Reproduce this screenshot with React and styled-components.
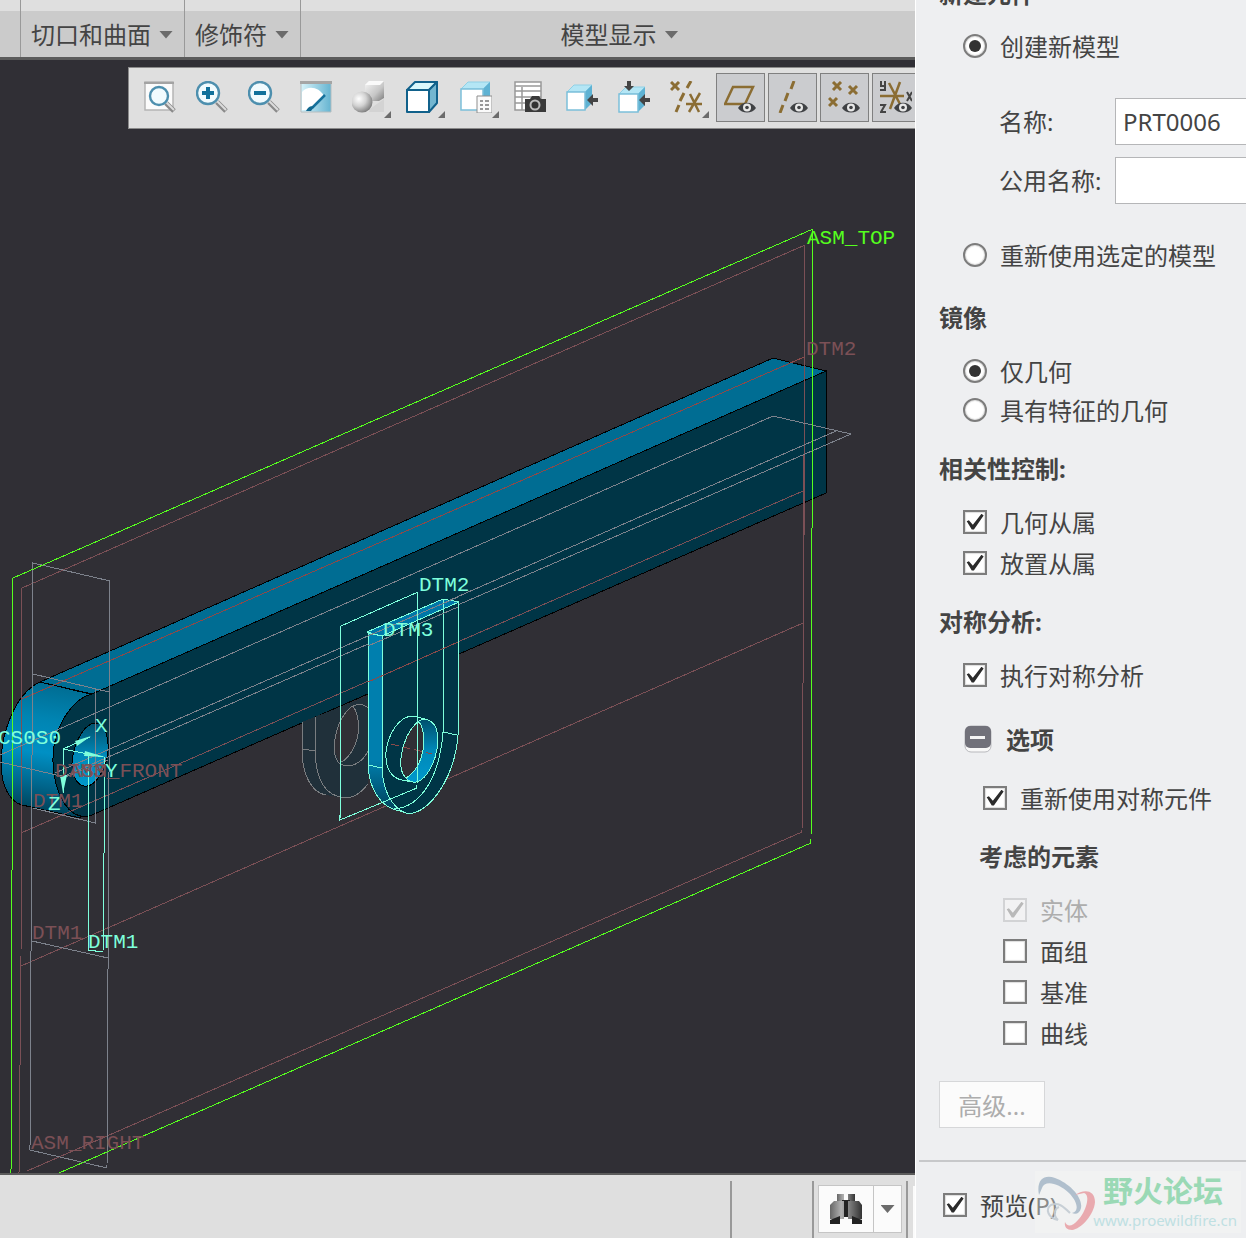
import React from 'react'
import styled, { createGlobalStyle, css } from 'styled-components'

const App = () => {
  return (
    <Page>
      <GlobalStyle />
      <Workspace>
        <Ribbon />
        <Canvas>
          <Model />
          <Toolbar />
        </Canvas>
        <StatusBar />
      </Workspace>
      <MirrorPanel />
    </Page>
  )
}

/* ---------- ribbon ---------- */

const Ribbon = () => (
  <RibbonBar>
    <Group $width={20} />
    <Group $width={164}>
      <GroupButton>切口和曲面<Arrow /></GroupButton>
    </Group>
    <Group $width={116}>
      <GroupButton>修饰符<Arrow /></GroupButton>
    </Group>
    <Group $center>
      <GroupButton>模型显示<Arrow /></GroupButton>
    </Group>
  </RibbonBar>
)

/* ---------- toolbar icons ---------- */

const Lens = ({ cx, cy, r }) => (
  <>
    <path d={`M${cx + r - 2} ${cy + r - 2}L30 30`} stroke="#8a8a8a" strokeWidth="5" />
    <path d={`M${cx + r - 2} ${cy + r - 3}L30 29`} stroke="#dcdcdc" strokeWidth="2" />
    <circle cx={cx} cy={cy} r={r} fill="#f1fbfe" stroke="#4d8fae" strokeWidth="2.4" />
  </>
)

const Eye = ({ x = 13, y = 20 }) => (
  <g transform={`translate(${x} ${y})`}>
    <path d="M0 7C4 0 14 0 18 7C14 13 4 13 0 7Z" fill="#3f4144" />
    <circle cx="9" cy="6.500" r="4" fill="#e8e8e8" />
    <circle cx="9" cy="6.500" r="1.800" fill="#3f4144" />
  </g>
)

const Box = ({ y = 0, w = 30, h = 32 }) => (
  <>
    <path d={`M1 ${y + 8}L8 ${y + 1}H${w}L${w - 7} ${y + 8}Z`} fill="#b4e6f5" stroke="#8fd0e6" />
    <path d={`M${w - 7} ${y + 8}L${w} ${y + 1}V${h - 8}L${w - 7} ${h - 1}Z`} fill="#5eb2d3" />
    <path d={`M1 ${y + 8}H${w - 7}V${h - 1}H1Z`} fill="#fff" stroke="#7cc0da" strokeWidth="1.500" />
  </>
)

const icons = {
  refit: (
    <>
      <path d="M1 1H29V29H1Z" fill="#fbfbfb" stroke="#b5b5b5" strokeWidth="1.500" />
      <path d="M0 2H30" stroke="#a3a3a3" strokeWidth="2" />
      <Lens cx={15} cy={15} r={9} />
    </>
  ),
  zoomIn: (
    <>
      <Lens cx={12} cy={12} r={11} />
      <path d="M12 6V18M6 12H18" stroke="#11719b" strokeWidth="4" />
    </>
  ),
  zoomOut: (
    <>
      <Lens cx={12} cy={12} r={11} />
      <path d="M6 12H18" stroke="#11719b" strokeWidth="4" />
    </>
  ),
  repaint: (
    <>
      <defs>
        <linearGradient id="sky" x2="1">
          <stop stopColor="#d8f3fa" />
          <stop offset="1" stopColor="#65b4d1" />
        </linearGradient>
      </defs>
      <path d="M1 2H31V31H1Z" fill="url(#sky)" stroke="#b4bdc0" />
      <path d="M0 1.500H32" stroke="#a5a5a5" strokeWidth="3" />
      <path d="M2 11C8 4 19 6 24 15L10 29H2Z" fill="#fff" />
      <path d="M25 14L12 27" stroke="#17719b" strokeWidth="2.500" />
      <path d="M6 30C8 26 11 24 14 26L11 30Z" fill="#12688f" />
    </>
  ),
  shading: (
    <>
      <defs>
        <radialGradient id="ball" cx=".35" cy=".35" r=".7">
          <stop stopColor="#fff" />
          <stop offset=".5" stopColor="#d2d2d2" />
          <stop offset="1" stopColor="#7c7c7c" />
        </radialGradient>
        <linearGradient id="cube" x2="1" y2="1">
          <stop stopColor="#f6f6f6" />
          <stop offset=".6" stopColor="#c6c6c6" />
          <stop offset="1" stopColor="#7c7c7c" />
        </linearGradient>
      </defs>
      <path d="M18 28L32 18V31H17Z" fill="#c8c8c8" opacity=".5" />
      <path d="M13 4L17 0H32V17L27 20H18L13 14Z" fill="url(#cube)" />
      <path d="M13 4L17 0H32L28 4Z" fill="#fafafa" />
      <circle cx="10" cy="21" r="10.500" fill="url(#ball)" />
    </>
  ),
  display: (
    <g stroke="#11618b" strokeWidth="2" strokeLinejoin="round">
      <path d="M1 9L9 1H31L23 9Z" fill="#d9f7fb" />
      <path d="M23 9L31 1V22L23 31Z" fill="#73b6d0" />
      <path d="M1 9H23V31H1Z" fill="#fff" />
    </g>
  ),
  saved: (
    <>
      <Box h={30} />
      <path d="M17 15H32V32H17Z" fill="#fafafa" stroke="#8e8e8e" />
      <path d="M20 20H23M25 20H29M20 24H23M25 24H29M20 28H23M25 28H29" stroke="#777" strokeWidth="1.500" />
    </>
  ),
  viewManager: (
    <>
      <path d="M1 1H27V29H1Z" fill="#fff" stroke="#999" strokeWidth="1.500" />
      <path d="M1 5H27M1 10H27M1 16H27M1 22H27M8 6V29" stroke="#999" strokeWidth="1.500" />
      <path d="M11 18H16L18 15H25L27 18H32V31H11Z" fill="#3a3a3a" />
      <circle cx="21" cy="24" r="5.500" fill="#bbb" />
      <circle cx="21" cy="24" r="3.500" fill="#333" />
    </>
  ),
  fromRight: (
    <>
      <Box y={3} w={26} h={30} />
      <path d="M21 19L27 13V17H32V21H27V25Z" fill="#444" />
    </>
  ),
  twoSides: (
    <>
      <Box y={5} w={27} h={32} />
      <path d="M21 19L27 13V17H32V21H27V25Z" fill="#444" />
      <path d="M11 10L6 5H9V0H13V5H16Z" fill="#444" />
    </>
  ),
  datumFilter: (
    <g stroke="#8b6d33" strokeWidth="3">
      <path d="M1 1L9 9M9 1L1 9M21 0L17 7M14 12L10 20M9 24L6 31" />
      <path d="M16 23H32M30 12L19 31M20 13L29 31" strokeWidth="2.500" />
    </g>
  ),
  planes: (
    <>
      <path d="M9 6H29L21 23H1Z" fill="none" stroke="#8b6d33" strokeWidth="2.500" />
      <Eye x={14} />
    </>
  ),
  axes: (
    <>
      <path d="M18 0L15 8M12 12L9 20M7 24L4 32" stroke="#8b6d33" strokeWidth="3" />
      <Eye x={14} />
    </>
  ),
  points: (
    <>
      <path d="M5 1L13 9M13 1L5 9M21 5L29 13M29 5L21 13M1 17L9 25M9 17L1 25" stroke="#8b6d33" strokeWidth="3" />
      <Eye x={14} />
    </>
  ),
  csys: (
    <>
      <path d="M0 15H24M20 1L10 28M9 2L21 25" stroke="#8b6d33" strokeWidth="2.500" />
      <path d="M1 0V5H5M5 0V9H0M27 11L32 20M32 11L27 20M0 24H5L1 31H6" fill="none" stroke="#444" strokeWidth="2" />
      <Eye x={14} />
    </>
  ),
}

const tools = [
  { icon: 'refit', label: '重新调整' },
  { icon: 'zoomIn', label: '放大' },
  { icon: 'zoomOut', label: '缩小' },
  { icon: 'repaint', label: '重画' },
  { icon: 'shading', label: '渲染选项', menu: true },
  { icon: 'display', label: '显示样式', menu: true },
  { icon: 'saved', label: '已保存方向', menu: true },
  { icon: 'viewManager', label: '视图管理器' },
  { icon: 'fromRight', label: '修剪' },
  { icon: 'twoSides', label: '双向修剪' },
  { icon: 'datumFilter', label: '基准显示过滤器', menu: true },
  { icon: 'planes', label: '平面显示', on: true },
  { icon: 'axes', label: '轴显示', on: true },
  { icon: 'points', label: '点显示', on: true },
  { icon: 'csys', label: '坐标系显示', on: true },
]

const Toolbar = () => (
  <ToolRow>
    {tools.map((t) => (
      <Tool key={t.icon} aria-label={t.label} $menu={t.menu} $on={t.on}>
        <svg width="32" height="32" viewBox="0 0 32 32">{icons[t.icon]}</svg>
      </Tool>
    ))}
  </ToolRow>
)

/* ---------- 3D view ---------- */

const Model = () => (
  <Drawing viewBox="0 60 915 1113" preserveAspectRatio="xMinYMin slice">
    <defs>
      <linearGradient id="round" x1=".3" y1="0" x2=".2" y2="1">
        <stop stopColor="#006d93" />
        <stop offset=".25" stopColor="#0084b2" />
        <stop offset=".5" stopColor="#0090c4" />
        <stop offset=".75" stopColor="#00648a" />
        <stop offset="1" stopColor="#003546" />
      </linearGradient>
      <linearGradient id="bore" x2="0" y2="1">
        <stop stopColor="#00506c" />
        <stop offset=".5" stopColor="#0088b8" />
        <stop offset="1" stopColor="#0098cc" />
      </linearGradient>
      <linearGradient id="foot" x2="0" y2="1">
        <stop stopColor="#007fae" />
        <stop offset=".7" stopColor="#007fae" />
        <stop offset="1" stopColor="#003f56" />
      </linearGradient>
    </defs>

    {/* link bar */}
    <g stroke="#000" shapeRendering="crispEdges">
      <path d="M40 682C14 694 1 735 1 763C1 788 11 802 22 805L80 818L100 700L90 694Z" fill="url(#round)" />
      <path d="M40 682L773 358L826 371L92 694Z" fill="#006d93" />
      <path d="M826 371V493L92 815C70 823 54 795 53 762C52 728 72 699 92 694Z" fill="#003546" />
      <path d="M95 723C107 724 110 742 107 758C103 775 93 788 84 786C74 784 70 769 73 755C77 736 86 724 95 723Z" fill="url(#bore)" />
    </g>

    {/* mirrored preview */}
    <g fill="none" stroke="#7a7d80" shapeRendering="crispEdges">
      <path d="M302 722V749C302 775 312 793 326 795L345 798C355 798 362 792 368 784V696Z" fill="#20303a" stroke="none" />
      <path d="M353 706C360 716 360 734 355 745C351 754 346 760 341 762C332 758 332 732 346 712Z" fill="#302f35" stroke="none" />
      <path d="M302 722V749C302 775 312 793 326 795M315 717V751C316 782 326 796 345 798C355 798 362 792 368 784M302 749L315 751" />
      <path d="M368 708C362 702 352 704 346 712C334 728 331 752 338 762C347 770 361 765 368 751M353 706C360 716 360 734 355 745C351 754 346 760 341 762" />
    </g>

    <g fill="none" shapeRendering="crispEdges">
      {/* inactive datum planes */}
      <g stroke="#7b5056">
        <path d="M22 588L805 245L804 540L802 832L27 1171M22 588L21 960L19 1173M803 455V540M21 833L803 491M21 966L803 623" />
        <path d="M22 699L804 357" stroke="#8b4a4a" />
      </g>
      <g stroke="#7d828c">
        <path d="M33 563L110 581L107 1168L30 1150ZM32 941L108 958M33 674L109 692M95 689V823L33 808" />
        <path d="M0 755L773 416L851 434L60 778M836 431L55 773M0 762L65 777L108 760" />
      </g>
      <path d="M59 1173L811 843L813 229L13 578L11 1173" stroke="#55ff1e" />
    </g>

    {/* bracket */}
    <g stroke="#7effdc" fill="none" shapeRendering="crispEdges">
      <path d="M368 633L382 636V768C384 790 394 806 412 814L400 811C380 808 369 788 368 765Z" fill="url(#foot)" />
      <path d="M382 636L458 602V735C455 775 432 812 408 814C390 808 383 788 382 768Z" fill="#003546" />
      <path d="M367 632L443 599L459 602L382 636Z" fill="#0077a8" />
      <path d="M443 599V732C440 773 423 807 394 809M443 732L457 735M368 765L382 768" />
      <path d="M425 719C436 721 440 733 437 749C434 767 423 784 413 782C403 780 399 769 402 755C405 737 415 719 425 719Z" fill="url(#bore)" />
      <path d="M419 722C425 729 425 746 421 758C418 767 412 775 406 778C399 771 400 757 404 744C408 732 413 725 419 722Z" fill="#302f35" />
      <path d="M425 719L413 716C399 716 388 734 386 752C385 768 391 778 402 780L413 782" />
    </g>
    <g fill="none" shapeRendering="crispEdges">
      <path d="M391 744L432 754" stroke="#8b4a4a" strokeDasharray="8 4" />
      <path d="M368 636L458 597M368 646L458 607" stroke="#7d828c" />
      <path d="M368 682L458 642" stroke="#8b4a4a" />
      <path d="M341 626L418 592L417 788L340 820ZM88 755V950L103 952L105 757M103 757L63 749L90 737M63 749V793" stroke="#7effdc" />
    </g>
    <path d="M91 736L75 741L77 746ZM105 757L85 751L84 756ZM63 793L60 775H67Z" fill="#7effdc" />

    <Tag x="807" y="244" $tone="#55ff1e">ASM_TOP</Tag>
    <Tag x="806" y="355">DTM2</Tag>
    <Tag x="55" y="777">DTM3</Tag>
    <Tag x="69" y="777">ASM_FRONT</Tag>
    <Tag x="33" y="807">DTM1</Tag>
    <Tag x="32" y="939">DTM1</Tag>
    <Tag x="31" y="1149">ASM_RIGHT</Tag>
    <Tag x="419" y="591" $tone="#7effdc">DTM2</Tag>
    <Tag x="383" y="636" $tone="#7effdc">DTM3</Tag>
    <Tag x="88" y="948" $tone="#7effdc">DTM1</Tag>
    <Tag x="-2" y="744" $tone="#7effdc">CS0S0</Tag>
    <Tag x="95" y="732" $tone="#7effdc">X</Tag>
    <Tag x="105" y="777" $tone="#7effdc">Y</Tag>
    <Tag x="48" y="810" $tone="#7effdc">Z</Tag>
  </Drawing>
)

/* ---------- status bar ---------- */

const StatusBar = () => (
  <Status>
    <Divider />
    <Cell />
    <Divider />
    <Search>
      <SearchButton aria-label="查找">
        <svg width="32" height="32" viewBox="0 0 32 32">
          <defs>
            <linearGradient id="tube" x2="1">
              <stop stopColor="#666" />
              <stop offset=".35" stopColor="#b0b0b0" />
              <stop offset="1" stopColor="#333" />
            </linearGradient>
          </defs>
          <path d="M7 1H14V8H7ZM18 1H25V8H18Z" fill="url(#tube)" />
          <path d="M12 7H20V24H12Z" fill="#222" />
          <path d="M4 8H14V26H0V12ZM18 8H29L32 12V26H18Z" fill="url(#tube)" />
          <path d="M0 27L10 23V31H0ZM32 27L22 23V31H32Z" fill="#222" />
        </svg>
      </SearchButton>
      <MenuButton aria-label="查找选项"><Arrow /></MenuButton>
    </Search>
    <Divider />
    <Edge />
  </Status>
)

/* ---------- mirror component panel ---------- */

const Option = ({ type = 'checkbox', name, indent = 24, checked, disabled, children }) => (
  <Row $indent={indent} $short={type === 'radio'} $disabled={disabled}>
    <Tick type={type} name={name} defaultChecked={checked} disabled={disabled} />
    <span>{children}</span>
  </Row>
)

const MirrorPanel = () => (
  <Panel>
    <PanelBody>
      <Heading $cut>新建元件</Heading>
      <Block $top={21}>
        <Option type="radio" name="source" checked>创建新模型</Option>
      </Block>
      <Fields>
        <Field>
          <label htmlFor="name">名称:</label>
          <input id="name" defaultValue="PRT0006" />
        </Field>
        <Field>
          <label htmlFor="common">公用名称:</label>
          <input id="common" />
        </Field>
      </Fields>
      <Block $top={32}>
        <Option type="radio" name="source">重新使用选定的模型</Option>
      </Block>

      <Heading $top={31}>镜像</Heading>
      <Block $top={22}>
        <Option type="radio" name="mirror" checked>仅几何</Option>
        <Option type="radio" name="mirror">具有特征的几何</Option>
      </Block>

      <Heading $top={27}>相关性控制:</Heading>
      <Block $top={21}>
        <Option checked>几何从属</Option>
        <Option checked>放置从属</Option>
      </Block>

      <Heading $top={26}>对称分析:</Heading>
      <Block $top={21}>
        <Option checked>执行对称分析</Option>
      </Block>
      <Collapse>
        <svg width="28" height="28" viewBox="0 0 28 28">
          <rect x="1" y="1" width="26" height="26" rx="6" fill="#f8f8f8" stroke="#b8b9bd" />
          <rect x="1" y="1" width="26" height="22" rx="5" fill="#71717a" />
          <path d="M6 12.500H21" stroke="#f4f4f4" strokeWidth="3" />
        </svg>
        选项
      </Collapse>
      <Block $top={19}>
        <Option indent={44} checked>重新使用对称元件</Option>
      </Block>

      <Heading $top={26} $indent={40}>考虑的元素</Heading>
      <Block $top={21}>
        <Option indent={64} checked disabled>实体</Option>
        <Option indent={64}>面组</Option>
        <Option indent={64}>基准</Option>
        <Option indent={64}>曲线</Option>
      </Block>
      <Advanced disabled>高级...</Advanced>
    </PanelBody>
    <PanelFooter>
      <Option checked>预览(P)</Option>
      <Watermark>
        <svg width="60" height="60" viewBox="0 0 60 60">
          <path d="M2 22C-1 7 7 1 18 5C32 10 46 24 44 35C43 40 39 42 35 40C43 38 40 28 32 20C21 9 7 7 5 15Z" fill="#a9bac9" />
          <path d="M38 22C46 16 58 16 58 29C57 42 44 56 35 57C30 57 27 54 28 49C30 54 35 54 41 47C49 39 54 22 47 20Z" fill="#e9a3a8" />
          <path d="M21 47C11 45 8 36 14 32C21 29 26 33 33 40M21 47C16 42 17 36 22 34" fill="none" stroke="#c3ccd3" strokeWidth="2" />
        </svg>
        <div>
          <strong>野火论坛</strong>
          <span>www.proewildfire.cn</span>
        </div>
      </Watermark>
    </PanelFooter>
  </Panel>
)

/* ---------- styles ---------- */

const GlobalStyle = createGlobalStyle`
  * {
    box-sizing: border-box;
  }

  body {
    margin: 0;
    background: #eeeff1;
  }

  body, button, input {
    font-family: 'Noto Sans', 'Noto Sans CJK SC', sans-serif;
    font-size: 24px;
    color: #444;
  }

  button {
    margin: 0;
    padding: 0;
    border: 0;
    background: none;
  }
`

const Page = styled.div`
  display: flex;
  height: 100vh;
  overflow: hidden;
`

const Workspace = styled.main`
  flex: 1;
  min-width: 0;
  display: flex;
  flex-direction: column;
`

const RibbonBar = styled.div`
  display: flex;
  height: 60px;
  background: linear-gradient(#dfdfdf 11px, #cbcbcb 11px);
  border-bottom: 3px solid #5b5b5b;
`

const Group = styled.div`
  display: flex;
  align-items: center;
  padding: 12px 0 0 11px;
  border-right: 1px solid #999;
  ${({ $width }) => $width && css`flex: 0 0 ${$width + 1}px; margin-right: -1px;`}
  ${({ $center }) => $center && css`
    flex: 1;
    justify-content: center;
    padding-left: 24px;
    border-right: 0;
  `}
`

const GroupButton = styled.button`
  display: flex;
  align-items: center;
  gap: 8px;
  line-height: 32px;
  white-space: nowrap;
`

const Arrow = styled.i`
  width: 14px;
  height: 8px;
  background: #6b6b6b;
  clip-path: polygon(0 0, 100% 0, 50% 100%);
`

const Canvas = styled.section`
  position: relative;
  flex: 1;
  min-height: 0;
  padding: 7px 0 0 128px;
  overflow: hidden;
  background: #302f35;
`

const Drawing = styled.svg`
  position: absolute;
  inset: 0;
  width: 100%;
  height: 100%;
`

const Tag = styled.text`
  font-family: 'Liberation Mono', monospace;
  font-size: 21px;
  fill: ${({ $tone }) => $tone || '#7b5056'};
`

const ToolRow = styled.div`
  position: relative;
  display: flex;
  gap: 3px;
  height: 62px;
  padding: 5px 7px;
  overflow: hidden;
  background: #dfdfdf;
  border: 1px solid #8a8a8a;
  border-right: 0;
`

const Tool = styled.button`
  position: relative;
  flex: none;
  display: flex;
  width: ${({ $menu }) => ($menu ? 51 : 49)}px;
  height: 49px;
  padding: 8px;

  ${({ $on }) => $on && css`
    padding: 7px;
    background: #cbcccf;
    border: 1px solid #808080;
  `}

  ${({ $menu }) => $menu && css`
    &::after {
      content: '';
      position: absolute;
      right: 4px;
      bottom: 4px;
      width: 7px;
      height: 7px;
      background: #6b6b6b;
      clip-path: polygon(100% 0, 100% 100%, 0 100%);
    }
  `}
`

const Status = styled.footer`
  display: flex;
  justify-content: flex-end;
  height: 65px;
  padding-top: 6px;
  background: #dfdfdf;
  border-top: 2px solid #5b5b5b;
`

const Divider = styled.span`
  width: 2px;
  background: #999;
`

const Cell = styled.span`
  width: 80px;
`

const Search = styled.div`
  display: flex;
  height: 48px;
  margin: 4px;
  border: 1px solid #c5c5c5;
  background: #fbfbfb;
`

const SearchButton = styled.button`
  display: flex;
  align-items: center;
  justify-content: center;
  width: 54px;
`

const MenuButton = styled(SearchButton)`
  width: 28px;
  border-left: 1px solid #c5c5c5;
`

const Edge = styled.span`
  width: 2px;
  margin: 5px 0 0 5px;
  background: #fbfbfb;
`

const Panel = styled.aside`
  flex: 0 0 331px;
  display: flex;
  flex-direction: column;
  min-width: 0;
  background: #eeeff1;
  border-left: 1px solid #fff;
`

const PanelBody = styled.div`
  flex: 1;
  min-height: 0;
  padding-left: 23px;
  overflow: hidden;
`

const Heading = styled.h2`
  margin: ${({ $top, $cut }) => ($cut ? -18 : $top)}px 0 0 ${({ $indent }) => $indent || 0}px;
  font-size: 24px;
  line-height: 24px;
  font-weight: 700;
`

const Block = styled.div`
  margin-top: ${({ $top }) => $top}px;
`

const Row = styled.label`
  display: flex;
  align-items: center;
  gap: 13px;
  height: ${({ $short }) => ($short ? 39 : 41)}px;
  padding-left: ${({ $indent }) => $indent}px;
  line-height: 24px;
  white-space: nowrap;
  color: ${({ $disabled }) => ($disabled ? '#adadad' : 'inherit')};
`

const Tick = styled.input`
  appearance: none;
  flex: none;
  display: flex;
  align-items: center;
  justify-content: center;
  width: 24px;
  height: 24px;
  margin: 0 0 2px;
  background: #fff;
  border: 2px solid #7c7c7c;
  box-shadow: inset 0 0 1px 1px #ddd;

  &[type='radio'] {
    border-radius: 50%;
  }

  &[type='radio']:checked::before {
    content: '';
    width: 12px;
    height: 12px;
    border-radius: 50%;
    background: #333;
  }

  &[type='checkbox']:checked::before {
    content: '';
    width: 18px;
    height: 16px;
    background: #2b2b2b;
    clip-path: polygon(4% 48%, 16% 42%, 38% 70%, 86% 2%, 98% 12%, 44% 100%, 32% 100%);
  }

  &:disabled {
    background: #f2f2f3;
    border-color: #d2d3d5;
    box-shadow: none;
  }

  &:disabled:checked::before {
    background: #b9b9b9 !important;
  }
`

const Fields = styled.div`
  display: flex;
  flex-direction: column;
  gap: 12px;
  margin: 32px 0 0 60px;
`

const Field = styled.div`
  display: flex;
  align-items: center;

  label {
    flex: 0 0 116px;
    line-height: 24px;
  }

  input {
    flex: 1;
    min-width: 0;
    height: 47px;
    padding: 0 7px;
    border: 1px solid #b5b6b8;
    border-right: 0;
    border-radius: 0;
    background: #fff;
  }
`

const Collapse = styled.button`
  display: flex;
  align-items: center;
  gap: 14px;
  height: 41px;
  margin: 22px 0 0 25px;
  font-weight: 700;
`

const Advanced = styled.button`
  display: block;
  width: 106px;
  height: 47px;
  margin-top: 27px;
  background: #fbfbfb;
  border: 1px solid #d6d7d9;
  color: #adadad;
`

const PanelFooter = styled.footer`
  position: relative;
  height: 78px;
  margin-left: 3px;
  padding-top: 23px;
  border-top: 2px solid #c7c8ca;
`

const Watermark = styled.div`
  position: absolute;
  right: 5px;
  bottom: 5px;
  display: flex;
  width: 206px;
  height: 62px;
  background: rgba(246, 248, 244, 0.4);

  svg {
    flex: none;
    margin: 2px 0 0 2px;
    opacity: 0.9;
  }

  div {
    display: flex;
    flex-direction: column;
    align-items: flex-end;
    flex: 1;
    min-width: 0;
    padding-right: 4px;
  }

  strong {
    margin-right: 14px;
    font-size: 30px;
    line-height: 40px;
    color: #9ad9b5;
    white-space: nowrap;
  }

  span {
    font-size: 15px;
    line-height: 18px;
    color: #bfe0e2;
    white-space: nowrap;
  }
`

export default App
